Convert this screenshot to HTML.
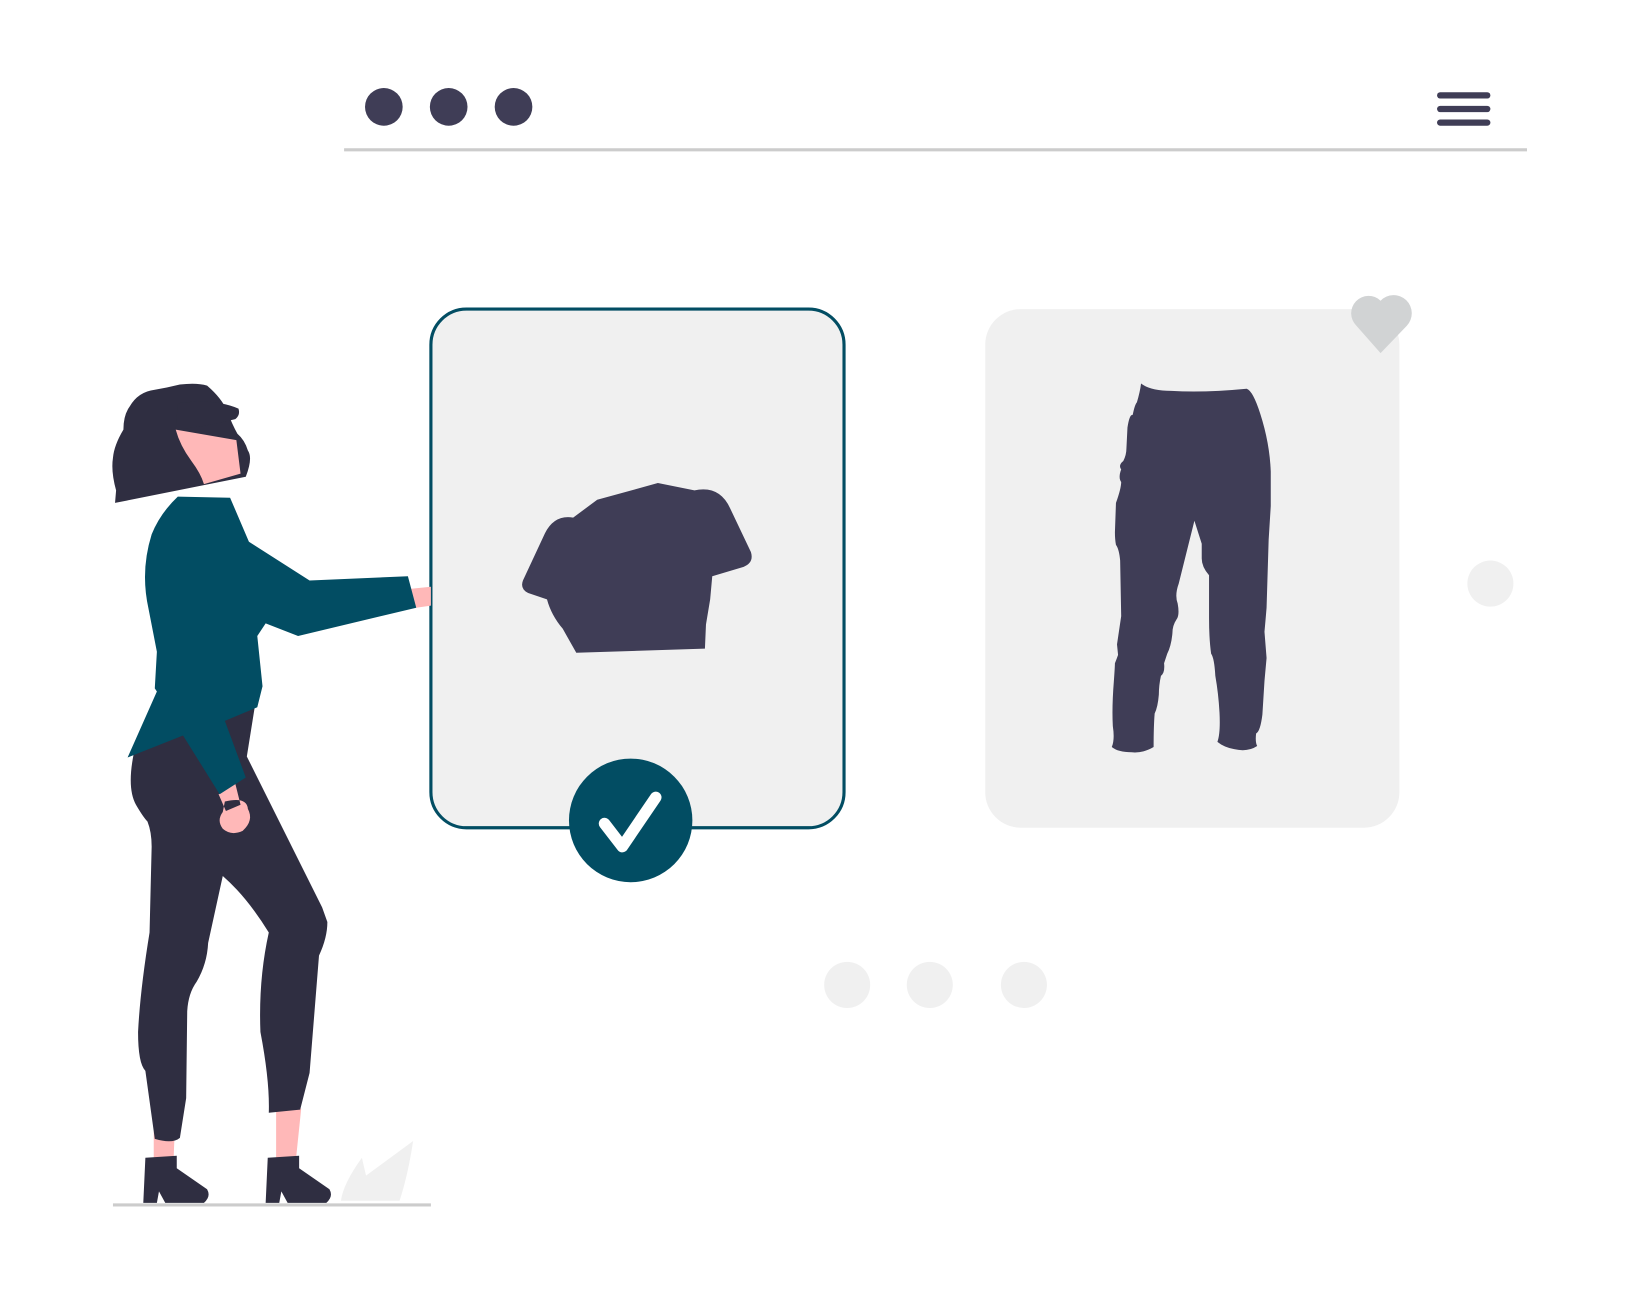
<!DOCTYPE html>
<html><head><style>html,body{margin:0;padding:0;background:#fff;overflow:hidden}svg{display:block}</style></head>
<body>
<svg width="1641" height="1294" viewBox="0 0 1569 1235" preserveAspectRatio="none" xmlns="http://www.w3.org/2000/svg">
<circle cx="367" cy="102" r="18" fill="#3f3d56"/>
<circle cx="429" cy="102" r="18" fill="#3f3d56"/>
<circle cx="491" cy="102" r="18" fill="#3f3d56"/>
<g stroke="#3f3d56" stroke-width="6" stroke-linecap="round"><line x1="1377" y1="91" x2="1422" y2="91"/><line x1="1377" y1="104" x2="1422" y2="104"/><line x1="1377" y1="117" x2="1422" y2="117"/></g>
<line x1="329" y1="143" x2="1460" y2="143" stroke="#ccc" stroke-width="3"/>
<rect x="942" y="295" width="396" height="495" rx="34" fill="#f0f0f0"/>
<path d="M1320 337 L1297 311 A16 16 0 0 1 1320 287 A16 16 0 0 1 1345 311 Z" fill="#d1d3d4"/>
<rect x="412" y="295" width="395" height="495" rx="34" fill="#f0f0f0" stroke="#024d63" stroke-width="3"/>
<circle cx="1425" cy="557" r="22" fill="#f0f0f0"/>
<circle cx="810" cy="940" r="22" fill="#f0f0f0"/>
<circle cx="889" cy="940" r="22" fill="#f0f0f0"/>
<circle cx="979" cy="940" r="22" fill="#f0f0f0"/>
<path d="M548 494 L571 477 L629 461 L664 468 Q688 463 698 485 L718 527 Q721 537 711 541 L681 550 L679 572 L675 596 L674 619 L551 623 L538 600 Q527 587 523 572 L505 566 Q497 562 500 554 L521 509 Q530 491 548 494 Z" fill="#3f3d56"/>
<path d="M1091 366 Q1100 373 1120 373 Q1150 375 1192 371 Q1198 373 1205 395 Q1214 423 1215 450 L1215 483 L1213 515 L1211 580 Q1210 592 1209 603 L1211 628 L1209 650 L1207 682 Q1205 698 1201 700 Q1200 708 1202 712 Q1193 718 1180 715 Q1170 713 1164 708 Q1167 700 1166 680 Q1165 662 1162 645 Q1161 628 1158 624 Q1156 610 1156 590 L1156 549 Q1149 541 1149 533 L1149 519 L1142 497 L1127 557 Q1123 568 1126 576 Q1128 587 1125 591 Q1121 597 1121 604 Q1120 616 1116 624 L1113 633 Q1114 642 1110 645 Q1108 654 1108 663 Q1107 675 1104 681 Q1103 693 1103 713 Q1093 719 1082 718 Q1069 718 1063 713 Q1066 706 1064 693 Q1063 675 1065 650 Q1066 636 1066 633 Q1068 628 1069 625 L1068 615 L1072 588 L1071 535 Q1070 524 1067 520 Q1066 515 1066 508 L1067 480 Q1072 466 1072 460 Q1069 456 1072 448 Q1069 444 1074 440 Q1077 434 1077 428 L1078 408 Q1080 395 1083 396 Q1085 386 1087 384 Q1090 374 1091 366 Z" fill="#3f3d56"/>
<circle cx="603" cy="783" r="59" fill="#024d63"/>
<path d="M578 786 L595 808 L627 761" fill="none" stroke="#fff" stroke-width="11" stroke-linecap="round" stroke-linejoin="round"/>
<path d="M392 562 L412 560 L412 578 L398 580 Z" fill="#ffb8b8"/>
<path d="M147 1080 L167 1080 L166 1106 L147 1106 Z M264 1060 L288 1058 L283 1106 L264 1106 Z" fill="#ffb8b8"/>
<path d="M130 710 Q120 750 130 768 Q137 780 141 784 Q145 794 145 808 L143 890 Q134 945 132 985 Q132 1015 139 1022 L148 1087 Q165 1092 172 1086 L178 1048 L179 965 Q180 948 188 937 Q198 920 199 900 L213 836 Q236 856 257 890 Q247 935 249 985 Q258 1032 257 1062 L287 1059 L296 1024 L305 912 Q313 895 313 880 L308 866 L236 722 L244 672 L160 690 Z" fill="#2f2e41"/>
<path d="M139 1105 L169 1103 L169 1115 L198 1135 Q202 1142 195 1148 L158 1148 L152 1137 L150 1148 L137 1148 Z M256 1105 L286 1103 L286 1115 L315 1135 Q319 1142 312 1148 L275 1148 L269 1137 L267 1148 L254 1148 Z" fill="#2f2e41"/>
<path d="M215 765 Q236 760 237 772 Q243 783 232 793 Q221 798 213 791 Q207 783 213 775 Z M209 758 L216 774 L230 768 L225 748 Z" fill="#ffb8b8"/>
<path d="M110 480 L235 455 Q242 437 237 430 Q234 420 227 414 Q222 405 217 392 Q212 380 198 368 Q188 365 172 367 Q160 370 148 372 Q132 374 124 388 Q118 396 118 410 Q109 425 108 437 Q106 450 111 468 Z" fill="#2f2e41"/>
<path d="M168 410 Q198 407 225 400 Q230 396 228 390 Q205 380 170 385 Z" fill="#2f2e41"/>
<path d="M168 410 Q172 425 183 440 Q192 452 195 462 L230 452 L226 420 Z" fill="#ffb8b8"/>
<path d="M170 474 L220 475 L238 517 L296 554 L390 550 L398 580 L285 607 L254 595 L246 607 L251 655 L246 675 L215 688 L235 742 L210 758 L175 702 L122 723 L150 660 L148 657 L150 622 L142 581 Q134 545 145 510 Q153 490 170 474 Z" fill="#024d63"/>
<line x1="108" y1="1150" x2="412" y2="1150" stroke="#ccc" stroke-width="3"/>
<path d="M326 1146 Q328 1130 346 1105 L350 1122 L395 1089 Q390 1122 382 1146 Z" fill="#f0f0f0"/>
</svg>
</body></html>
